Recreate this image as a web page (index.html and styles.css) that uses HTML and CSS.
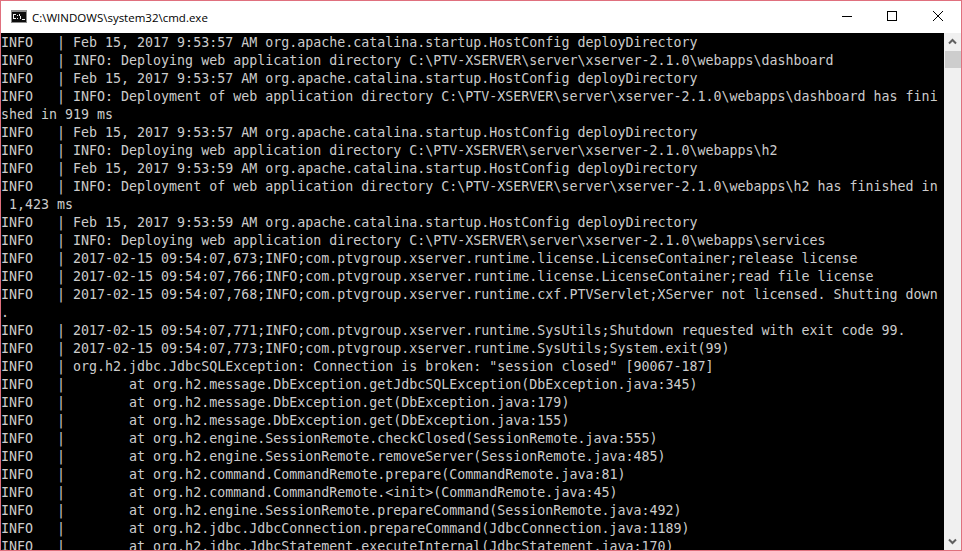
FILE: index.html
```html
<!DOCTYPE html>
<html lang="en">
<head>
<meta charset="utf-8">
<title>cmd.exe</title>
<link rel="stylesheet" href="styles.css">
</head>
<body>
<div class="window">
  <header class="titlebar">
    <svg class="app-icon" width="16" height="13" viewBox="0 0 16 13"><rect width="16" height="13" fill="#8c8c8c"/><rect x="1" y="2" width="14" height="10" fill="#0c0c0c"/><rect x="2" y="4" width="3" height="1" fill="#eee"/><rect x="2" y="5" width="1" height="3" fill="#eee"/><rect x="2" y="8" width="3" height="1" fill="#eee"/><rect x="6" y="5" width="1" height="1" fill="#eee"/><rect x="6" y="8" width="1" height="1" fill="#eee"/><rect x="8" y="4" width="1" height="2" fill="#eee"/><rect x="9" y="6" width="1" height="3" fill="#eee"/><rect x="11" y="9" width="3" height="1" fill="#eee"/></svg>
    <span class="title">C:\WINDOWS\system32\cmd.exe</span>
    <div class="controls">
      <svg class="control" width="46" height="32" viewBox="0 0 46 32"><path d="M19 15.5h10" stroke="#000" fill="none"/></svg>
      <svg class="control" width="46" height="32" viewBox="0 0 46 32"><rect x="18.5" y="10.5" width="9" height="9" stroke="#000" fill="none"/></svg>
      <svg class="control" width="46" height="32" viewBox="0 0 46 32"><path d="M18 10l10 10M28 10L18 20" stroke="#000" fill="none"/></svg>
    </div>
  </header>
  <main class="content">
    <pre class="console">INFO   | Feb 15, 2017 9:53:57 AM org.apache.catalina.startup.HostConfig deployDirectory
INFO   | INFO: Deploying web application directory C:\PTV-XSERVER\server\xserver-2.1.0\webapps\dashboard
INFO   | Feb 15, 2017 9:53:57 AM org.apache.catalina.startup.HostConfig deployDirectory
INFO   | INFO: Deployment of web application directory C:\PTV-XSERVER\server\xserver-2.1.0\webapps\dashboard has fini
shed in 919 ms
INFO   | Feb 15, 2017 9:53:57 AM org.apache.catalina.startup.HostConfig deployDirectory
INFO   | INFO: Deploying web application directory C:\PTV-XSERVER\server\xserver-2.1.0\webapps\h2
INFO   | Feb 15, 2017 9:53:59 AM org.apache.catalina.startup.HostConfig deployDirectory
INFO   | INFO: Deployment of web application directory C:\PTV-XSERVER\server\xserver-2.1.0\webapps\h2 has finished in
 1,423 ms
INFO   | Feb 15, 2017 9:53:59 AM org.apache.catalina.startup.HostConfig deployDirectory
INFO   | INFO: Deploying web application directory C:\PTV-XSERVER\server\xserver-2.1.0\webapps\services
INFO   | 2017-02-15 09:54:07,673;INFO;com.ptvgroup.xserver.runtime.license.LicenseContainer;release license
INFO   | 2017-02-15 09:54:07,766;INFO;com.ptvgroup.xserver.runtime.license.LicenseContainer;read file license
INFO   | 2017-02-15 09:54:07,768;INFO;com.ptvgroup.xserver.runtime.cxf.PTVServlet;XServer not licensed. Shutting down
.
INFO   | 2017-02-15 09:54:07,771;INFO;com.ptvgroup.xserver.runtime.SysUtils;Shutdown requested with exit code 99.
INFO   | 2017-02-15 09:54:07,773;INFO;com.ptvgroup.xserver.runtime.SysUtils;System.exit(99)
INFO   | org.h2.jdbc.JdbcSQLException: Connection is broken: "session closed" [90067-187]
INFO   |        at org.h2.message.DbException.getJdbcSQLException(DbException.java:345)
INFO   |        at org.h2.message.DbException.get(DbException.java:179)
INFO   |        at org.h2.message.DbException.get(DbException.java:155)
INFO   |        at org.h2.engine.SessionRemote.checkClosed(SessionRemote.java:555)
INFO   |        at org.h2.engine.SessionRemote.removeServer(SessionRemote.java:485)
INFO   |        at org.h2.command.CommandRemote.prepare(CommandRemote.java:81)
INFO   |        at org.h2.command.CommandRemote.&lt;init&gt;(CommandRemote.java:45)
INFO   |        at org.h2.engine.SessionRemote.prepareCommand(SessionRemote.java:492)
INFO   |        at org.h2.jdbc.JdbcConnection.prepareCommand(JdbcConnection.java:1189)
INFO   |        at org.h2.jdbc.JdbcStatement.executeInternal(JdbcStatement.java:170)</pre>
    <aside class="scrollbar">
      <svg width="17" height="17" viewBox="0 0 17 17"><path d="M5 10.5l3.5-3.5 3.5 3.5" stroke="#606060" stroke-width="2" fill="none"/></svg>
      <div class="thumb"></div>
      <div class="track"></div>
      <svg width="17" height="17" viewBox="0 0 17 17"><path d="M5 6.5l3.5 3.5 3.5-3.5" stroke="#606060" stroke-width="2" fill="none"/></svg>
    </aside>
  </main>
</div>
</body>
</html>
```
FILE: styles.css
```css
html, body { margin: 0; height: 100%; overflow: hidden; }
.window {
  box-sizing: border-box;
  width: 962px;
  height: 551px;
  display: flex;
  flex-direction: column;
  border: 1px solid #e0707e;
  background: #fff;
}
.titlebar {
  flex: 0 0 32px;
  display: flex;
  align-items: center;
  background: #fff;
}
.app-icon { margin: -1px 0 0 10px; }
.title {
  margin-left: 5px;
  font: 11.5px "Open Sans", sans-serif;
  color: #000;
  white-space: nowrap;
}
.controls { margin-left: auto; display: flex; }
.control { display: block; }
.content { flex: 1; min-height: 0; display: flex; }
.console {
  flex: 1;
  margin: 0;
  padding-top: 1px;
  overflow: hidden;
  background: #000;
  color: #ccc;
  font: 13.3px/18px "DejaVu Sans Mono", monospace;
}
.scrollbar {
  flex: 0 0 17px;
  display: flex;
  flex-direction: column;
  background: #f0f0f0;
}
.scrollbar svg { display: block; }
.thumb { height: 17px; margin: 1px 0 0 1px; background: #cdcdcd; }
.track { flex: 1; }
```
